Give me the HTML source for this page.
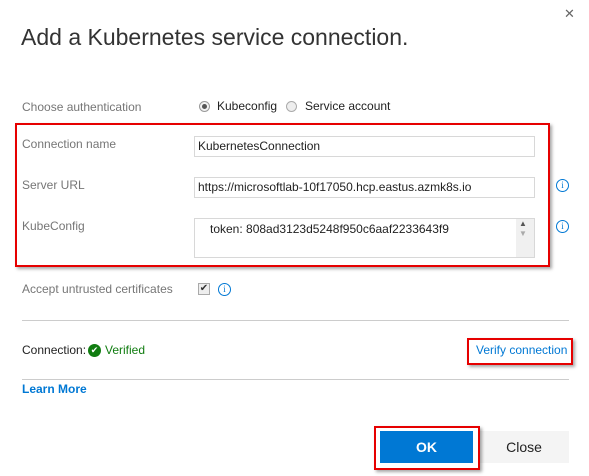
<!DOCTYPE html>
<html><head><style>
body{margin:0;width:589px;height:476px;background:#fff;font-family:"Segoe UI","Liberation Sans",sans-serif;position:relative;overflow:hidden;color:#222}
.a{position:absolute}
.lbl{font-size:12px;color:#767676}
.inp{position:absolute;border:1px solid #d8d8d8;background:#fff;font-size:12px;color:#222;box-sizing:border-box;padding:2px 0 0 3px}
.info{position:absolute;width:11px;height:11px;border:1px solid #0078d4;border-radius:50%;color:#0078d4;font-size:9px;line-height:11px;text-align:center;font-family:"Liberation Serif",serif}
.red{position:absolute;border:2px solid #e60000;box-sizing:border-box;box-shadow:2px 2px 3px rgba(0,0,0,.35)}
</style></head><body>
<div class="a" style="left:564px;top:6px;font-size:13px;color:#666">✕</div>
<div class="a" style="left:21px;top:24px;font-size:23px;font-weight:300;color:#333">Add a Kubernetes service connection.</div>

<div class="a lbl" style="left:22px;top:100px">Choose authentication</div>
<div class="a" style="left:199px;top:101px;width:11px;height:11px;border:1px solid #999;border-radius:50%;box-sizing:border-box;background:#f2f2f2"><div style="margin:2px;width:5px;height:5px;border-radius:50%;background:#555"></div></div>
<div class="a" style="left:217px;top:99px;font-size:12px">Kubeconfig</div>
<div class="a" style="left:286px;top:101px;width:11px;height:11px;border:1px solid #aaa;border-radius:50%;box-sizing:border-box;background:#eee"></div>
<div class="a" style="left:305px;top:99px;font-size:12px">Service account</div>

<div class="red" style="left:15px;top:123px;width:535px;height:144px"></div>
<div class="a lbl" style="left:22px;top:137px">Connection name</div>
<div class="inp" style="left:194px;top:136px;width:341px;height:21px">KubernetesConnection</div>
<div class="a lbl" style="left:22px;top:178px">Server URL</div>
<div class="inp" style="left:194px;top:177px;width:341px;height:21px">https://microsoftlab-10f17050.hcp.eastus.azmk8s.io</div>
<div class="info" style="left:556px;top:179px">i</div>
<div class="a lbl" style="left:22px;top:219px">KubeConfig</div>
<div class="inp" style="left:194px;top:218px;width:341px;height:40px;padding:3px 0 0 15px">token: 808ad3123d5248f950c6aaf2233643f9</div>
<div class="a" style="left:516px;top:219px;width:18px;height:38px;background:#f0f0f0"></div>
<div class="a" style="left:519px;top:219px;font-size:8px;color:#555">▲</div>
<div class="a" style="left:519px;top:229px;font-size:8px;color:#aaa">▼</div>
<div class="info" style="left:556px;top:220px">i</div>

<div class="a lbl" style="left:22px;top:282px">Accept untrusted certificates</div>
<div class="a" style="left:198px;top:283px;width:12px;height:12px;border:1px solid #aaa;box-sizing:border-box;background:#eee;font-size:10px;line-height:10px;text-align:center;color:#333">✔</div>
<div class="info" style="left:218px;top:283px">i</div>

<div class="a" style="left:22px;top:320px;width:547px;height:1px;background:#ccc"></div>
<div class="a" style="left:22px;top:343px;font-size:12px;color:#222">Connection:</div>
<div class="a" style="left:88px;top:344px;width:13px;height:13px;border-radius:50%;background:#107c10;color:#fff;font-size:9px;line-height:13px;text-align:center">✔</div>
<div class="a" style="left:105px;top:343px;font-size:12px;color:#107c10">Verified</div>
<div class="red" style="left:467px;top:338px;width:106px;height:27px"></div>
<div class="a" style="left:476px;top:343px;font-size:12px;color:#0078d4">Verify connection</div>
<div class="a" style="left:22px;top:379px;width:547px;height:1px;background:#ccc"></div>
<div class="a" style="left:22px;top:382px;font-size:12px;font-weight:bold;color:#0078d4">Learn More</div>

<div class="a" style="left:479px;top:431px;width:90px;height:32px;background:#f4f4f4;font-size:14px;line-height:32px;text-align:center;color:#222">Close</div>
<div class="red" style="left:374px;top:426px;width:106px;height:44px"></div>
<div class="a" style="left:380px;top:431px;width:93px;height:32px;background:#0078d4;color:#fff;font-size:14px;font-weight:bold;line-height:32px;text-align:center">OK</div>
</body></html>
